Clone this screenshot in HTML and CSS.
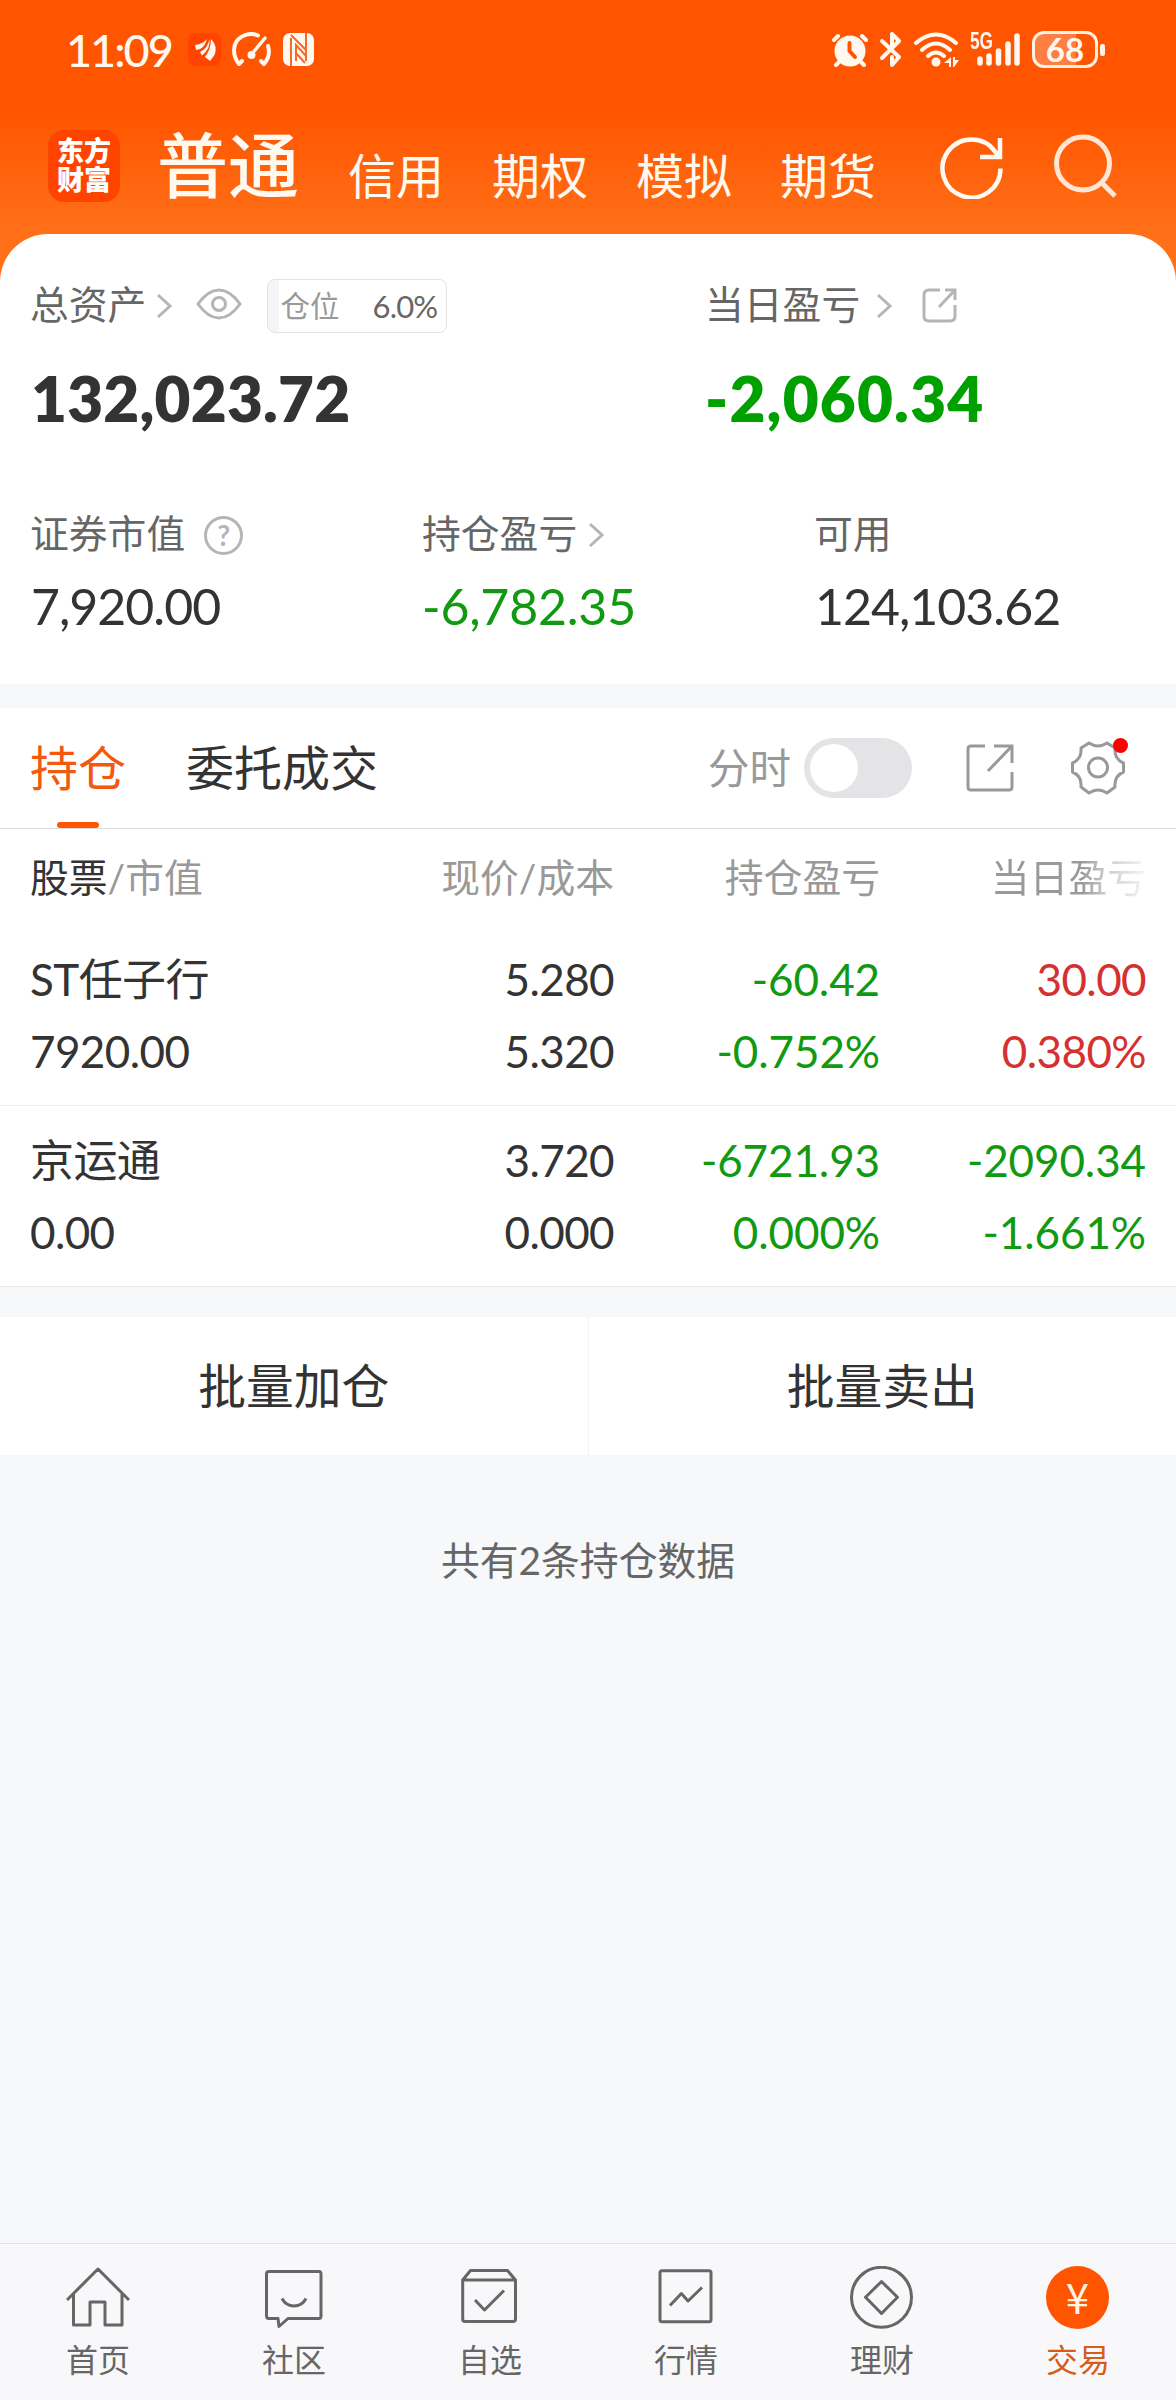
FILE: index.html
```html
<!DOCTYPE html>
<html lang="zh-CN">
<head>
  <meta charset="UTF-8">
  <title>交易</title>
  <link rel="stylesheet" href="styles.css">
</head>
<body>
  <div class="header">
    <div class="status-bar">
      <span class="time">11:09</span>
      <svg class="st-app" width="33" height="33" viewBox="0 0 33 33">
        <rect width="33" height="33" rx="7" fill="#ff4400"/>
        <path d="M7 12Q15 11 19 6Q16 17 8 17ZM12 19Q20 15 21.500 6Q23 15 14 22.500ZM17 24Q23 16 23 6Q30 13 26.500 22L22 28Z" fill="#fff8ee"/>
      </svg>
      <svg class="st-gauge" width="40" height="35" viewBox="0 0 40 35" fill="none" stroke="#fff8ee" stroke-width="4" stroke-linecap="round">
        <path d="M7 32Q2 26 2 18A17 16 0 0 1 26 3.500M36 14Q39 24 32 32M7 32l3-3M32 32l-3-3"/>
        <path d="M33 6L19 23" stroke-width="3.500"/>
        <circle cx="19.500" cy="23" r="4" fill="#fff8ee" stroke="none"/>
      </svg>
      <svg class="st-nfc" width="31" height="33" viewBox="0 0 31 33">
        <rect width="31" height="33" rx="7" fill="#fff8ee"/>
        <path d="M8 5V33M23 0V28M8 2L23 17M13 28V12L23 23M13 20L22 30" fill="none" stroke="#f56a28" stroke-width="2"/>
      </svg>
      <div class="status-right">
        <svg width="36" height="35" viewBox="0 0 36 35" fill="none" stroke="#fff8ee" stroke-width="4" stroke-linecap="round">
          <circle cx="18" cy="19" r="15.500" fill="#fff8ee" stroke="none"/>
          <path d="M2 8L6 4M34 8L30 4M7 30l-3 3M29 30l3 3"/>
          <path d="M17.500 11V19L23 25" stroke="#ff5500" stroke-width="4"/>
        </svg>
        <svg class="st-bt" width="22" height="35" viewBox="0 0 22 35" fill="none" stroke="#fff8ee" stroke-width="4" stroke-linejoin="round" stroke-linecap="round">
          <path d="M2 9L19 25L12 33V25M2 26L19 9L12 2V16"/>
        </svg>
        <svg class="st-wifi" width="45" height="35" viewBox="0 0 45 35" fill="none" stroke="#fff8ee" stroke-width="4" stroke-linecap="round">
          <path d="M2 11Q22 -6 42 11M8 18Q22 5 36 18M14 24Q22 17 30 24"/>
          <circle cx="22" cy="30" r="4.500" fill="#fff8ee" stroke="none"/>
          <path d="M30 31L37 25V35H35V31ZM39 25H41V28H45L40 35H39Z" fill="#fff8ee" stroke="none"/>
        </svg>
        <div class="signal">
          <span class="net">5G</span>
          <svg width="51" height="35" viewBox="0 0 51 35" stroke="#fff8ee" stroke-width="5.500" stroke-linecap="round">
            <path d="M10 27V31M19 24V31M28.500 19V31M38 12V31M47 4V31"/>
          </svg>
        </div>
        <div class="battery"><span>68</span></div>
        <i class="battery-nub"></i>
      </div>
    </div>

    <div class="nav-top">
      <div class="logo">东方<br>财富</div>
      <div class="accounts">
        <span class="account active">普通</span>
        <span class="account">信用</span>
        <span class="account">期权</span>
        <span class="account">模拟</span>
        <span class="account">期货</span>
      </div>
      <svg class="refresh" width="64" height="64" viewBox="0 0 64 64" fill="none" stroke="#fffaf0" stroke-width="4.500">
        <path d="M60.500 33.500A29 29 0 1 1 55 16.500L60 22"/>
        <path d="M60 3V22H40"/>
      </svg>
      <svg class="search" width="64" height="64" viewBox="0 0 64 64" fill="none" stroke="#ffe6d3" stroke-width="5">
        <circle cx="29" cy="29.500" r="26.500"/>
        <path d="M47 48L61 62"/>
      </svg>
    </div>
  </div>

  <div class="assets">
    <div class="totals">
      <div class="total">
        <div class="label">总资产
          <svg class="arrow total-arrow" width="17" height="26" viewBox="0 0 17 26"><path d="M2 2L14 13L2 24"/></svg>
          <svg class="eye" width="46" height="32" viewBox="0 0 46 32" fill="none" stroke="#b5b5b5" stroke-width="3">
            <path d="M2 16Q12 2 23 2Q34 2 44 16Q34 30 23 30Q12 30 2 16Z"/>
            <circle cx="23" cy="16" r="6.500"/>
          </svg>
          <span class="position"><em>仓位</em>6.0%</span>
        </div>
        <div class="amount">132,023.72</div>
      </div>
      <div class="total">
        <div class="label">当日盈亏
          <svg class="arrow day-arrow" width="17" height="26" viewBox="0 0 17 26"><path d="M2 2L14 13L2 24"/></svg>
          <svg class="share" width="36" height="36" viewBox="0 0 36 36" fill="none" stroke="#b5b5b5" stroke-width="3">
            <path d="M18 2H7Q2 2 2 7V28Q2 33 7 33H28Q33 33 33 28V17"/>
            <path d="M23 2H33V12M33 2L17 19"/>
          </svg>
        </div>
        <div class="amount green">-2,060.34</div>
      </div>
    </div>

    <div class="details">
      <div class="detail">
        <div class="label">证券市值 <span class="help">?</span></div>
        <div class="value">7,920.00</div>
      </div>
      <div class="detail">
        <div class="label">持仓盈亏
          <svg class="arrow hold-arrow" width="17" height="26" viewBox="0 0 17 26"><path d="M2 2L14 13L2 24"/></svg>
        </div>
        <div class="value green">-6,782.35</div>
      </div>
      <div class="detail">
        <div class="label">可用</div>
        <div class="value">124,103.62</div>
      </div>
    </div>
  </div>

  <div class="holdings">
    <div class="tabs">
      <span class="tab active">持仓</span>
      <span class="tab">委托成交</span>
      <span class="switch-label">分时</span>
      <span class="switch"></span>
      <svg class="export" width="48" height="48" viewBox="0 0 48 48" fill="none" stroke="#999" stroke-width="3">
        <path d="M19 2H5Q2 2 2 5V43Q2 46 5 46H43Q46 46 46 43V28"/>
        <path d="M28 2H46V19M46 2L22 27"/>
      </svg>
      <div class="settings">
        <svg width="54" height="54" viewBox="0 0 54 54" fill="none" stroke="#999" stroke-width="3" stroke-linejoin="round">
          <path d="M18 2Q27 8 36 2L44 7Q43 18 52.500 22V31Q43 35 44 46L36 52Q27 46 18 52L10 46Q11 35 1.500 31V22Q11 18 10 7Z"/>
          <circle cx="27" cy="26.500" r="9.500"/>
        </svg>
        <i class="dot"></i>
      </div>
    </div>

    <div class="row head">
      <div><b>股票</b>/市值</div>
      <div>现价/成本</div>
      <div>持仓盈亏</div>
      <div class="fade">当日盈亏</div>
    </div>
    <div class="row">
      <div>ST任子行<br>7920.00</div>
      <div>5.280<br>5.320</div>
      <div class="green">-60.42<br>-0.752%</div>
      <div class="red">30.00<br>0.380%</div>
    </div>
    <div class="row">
      <div>京运通<br>0.00</div>
      <div>3.720<br>0.000</div>
      <div class="green">-6721.93<br>0.000%</div>
      <div class="green">-2090.34<br>-1.661%</div>
    </div>
  </div>

  <div class="batch">
    <div class="batch-btn">批量加仓</div>
    <div class="batch-btn">批量卖出</div>
  </div>

  <p class="summary">共有2条持仓数据</p>

  <div class="bottom-nav">
    <div class="nav-item">
      <svg width="64" height="64" viewBox="0 0 64 64">
        <path d="M1 34L32 3L63 34M7.500 28V59H24V36H39V59H56V28"/>
      </svg>
      首页
    </div>
    <div class="nav-item">
      <svg width="64" height="64" viewBox="0 0 64 64">
        <path d="M7 5.500H57Q59 5.500 59 8V50Q59 52.500 57 52.500H26L17 60.500L16 52.500H7Q4.500 52.500 4.500 50V8Q4.500 5.500 7 5.500ZM20 32.500Q24 40 32 40Q40 40 44 32.500"/>
      </svg>
      社区
    </div>
    <div class="nav-item">
      <svg width="64" height="64" viewBox="0 0 64 64">
        <path d="M4.700 14L12.500 4.500H49.500L57.500 14V53Q57.500 55.500 55 55.500H7Q4.700 55.500 4.700 53ZM4.700 14H57.500M17 34L26.500 44L46 24.500"/>
      </svg>
      自选
    </div>
    <div class="nav-item">
      <svg width="64" height="64" viewBox="0 0 64 64">
        <rect x="6" y="4.700" width="51" height="51" rx="2"/>
        <path d="M16 39.500L27.400 27.500L34 35L48 21.500"/>
      </svg>
      行情
    </div>
    <div class="nav-item">
      <svg width="64" height="64" viewBox="0 0 64 64">
        <circle cx="31.500" cy="31.300" r="30"/>
        <path d="M31.500 15.500L47.500 31.300L31.500 47.500L15.500 31.300Z"/>
      </svg>
      理财
    </div>
    <div class="nav-item active">
      <span class="coin">¥</span>
      交易
    </div>
  </div>
</body>
</html>
```
FILE: styles.css
```css
* {
  box-sizing: border-box;
}

body {
  margin: 0;
  width: 1176px;
  height: 2400px;
  display: flex;
  flex-direction: column;
  background-color: #f7f8fa;
  color: #333;
  font-family: Lato, "Noto Sans CJK SC", sans-serif;
}

svg {
  display: block;
  flex: none;
}

.green {
  color: #119911;
}

.red {
  color: #d63031;
}

/* header */
.header {
  height: 284px;
  background: linear-gradient(#ff5500 0, #ff5500 112px, #ff7019 234px, #ff7019 100%);
}

.status-bar {
  height: 99px;
  padding-left: 66px;
  padding-right: 71px;
  display: flex;
  align-items: center;
  color: #fff8ee;
}

.time {
  width: 122px;
  font-size: 45px;
  font-weight: 500;
  letter-spacing: -2px;
}

.st-gauge {
  margin-left: 11px;
}

.st-nfc {
  margin-left: 11px;
}

.status-right {
  margin-left: auto;
  display: flex;
  align-items: center;
}

.st-bt {
  margin-left: 12px;
}

.st-wifi {
  margin-left: 12px;
}

.signal {
  position: relative;
  margin-left: 11px;
}

.net {
  position: absolute;
  left: 0;
  top: 0;
  font-family: "Liberation Sans", sans-serif;
  font-size: 24px;
  line-height: 18px;
  font-weight: bold;
  transform: scaleX(0.72);
  transform-origin: left;
}

.battery {
  width: 66px;
  height: 37px;
  margin-left: 11px;
  border: 3px solid #fff0e0;
  border-radius: 12px;
  background: linear-gradient(90deg, #ff7f42 68%, transparent 68%);
  font-size: 33px;
  line-height: 30px;
  font-weight: bold;
  text-align: center;
}

.battery-nub {
  width: 5px;
  height: 12px;
  margin-left: 2px;
  border-radius: 2px;
  background-color: #fff0e0;
}

.nav-top {
  height: 135px;
  padding-left: 48px;
  display: flex;
  align-items: flex-start;
}

.logo {
  width: 72px;
  height: 72px;
  margin-top: 31px;
  padding-top: 6px;
  border-radius: 16px;
  background-color: #ff4400;
  color: #fff;
  font-size: 27px;
  line-height: 29px;
  font-weight: 900;
  text-align: center;
}

.accounts {
  display: flex;
  gap: 48px;
  margin-left: 37px;
  margin-top: 26px;
  color: #fffaf0;
}

.account {
  font-size: 48px;
  line-height: 80px;
  padding-top: 11px;
}

.account.active {
  margin-right: 1px;
  font-size: 71px;
  font-weight: 500;
  padding-top: 0;
}

.refresh {
  margin-left: 64px;
  margin-top: 36px;
}

.search {
  margin-left: 50px;
  margin-top: 35px;
}

/* account card */
.assets {
  height: 450px;
  margin-top: -50px;
  padding: 40px 0 0 30px;
  border-radius: 48px 48px 0 0;
  background-color: #fff;
}

.totals {
  display: grid;
  grid-template-columns: 675px 1fr;
}

.label {
  height: 60px;
  display: flex;
  align-items: center;
  color: #666;
  font-size: 38.8px;
  line-height: 60px;
}

.arrow {
  fill: none;
  stroke: #b5b5b5;
  stroke-width: 3;
}

.total-arrow {
  margin-left: 10px;
  margin-top: 4px;
}

.eye {
  margin-left: 23px;
}

.position {
  width: 180px;
  height: 54px;
  margin-left: 25px;
  margin-top: 4px;
  padding: 0 9px 0 12px;
  display: flex;
  align-items: center;
  justify-content: space-between;
  border: 1px solid #e3e3e6;
  border-radius: 8px;
  background: linear-gradient(90deg, #f5f5f8 6%, #fff 6%);
  font-size: 31px;
  letter-spacing: -0.8px;
}

.position em {
  color: #999;
  font-size: 29.5px;
  font-style: normal;
  letter-spacing: 0;
}

.day-arrow {
  margin-left: 16px;
  margin-top: 4px;
}

.share {
  margin-left: 29px;
  margin-top: 4px;
}

.amount {
  margin-top: 24px;
  margin-left: 1px;
  font-size: 62px;
  line-height: 80px;
  font-weight: 800;
  letter-spacing: 0.2px;
}

.amount.green {
  margin-left: 0;
  color: #00a000;
  letter-spacing: 1.2px;
}

.details {
  margin-top: 65px;
  display: grid;
  grid-template-columns: 392px 392px 1fr;
}

.help {
  width: 39px;
  height: 39px;
  margin-left: 19px;
  margin-top: 4px;
  border: 3px solid #b5b5b5;
  border-radius: 50%;
  color: #b5b5b5;
  font-size: 28px;
  line-height: 32px;
  font-weight: bold;
  text-align: center;
}

.hold-arrow {
  margin-left: 11px;
  margin-top: 4px;
}

.value {
  margin-top: 13px;
  margin-left: 1px;
  font-size: 50px;
  line-height: 60px;
  letter-spacing: -1px;
}

.value.green {
  margin-left: 0;
  letter-spacing: -0.2px;
}

/* holdings list */
.holdings {
  margin-top: 24px;
  background-color: #fff;
}

.tabs {
  height: 121px;
  padding-left: 30px;
  display: flex;
  align-items: center;
  border-bottom: 1px solid #dcdcde;
}

.tab {
  position: relative;
  margin-right: 60px;
  font-size: 48px;
  line-height: 120px;
}

.tab.active {
  color: #f2590f;
}

.tab.active::after {
  content: "";
  position: absolute;
  left: 27px;
  bottom: 0;
  width: 42px;
  height: 6px;
  border-radius: 3px;
  background-color: #ff5500;
}

.switch-label {
  margin-left: auto;
  margin-bottom: 4px;
  color: #999;
  font-size: 41.5px;
}

.switch {
  width: 108px;
  height: 60px;
  margin-left: 13px;
  padding: 6px;
  border-radius: 30px;
  background-color: #e4e4e7;
}

.switch::before {
  content: "";
  display: block;
  width: 48px;
  height: 48px;
  border-radius: 50%;
  background-color: #fff;
}

.export {
  margin-left: 54px;
}

.settings {
  position: relative;
  margin-left: 57px;
  margin-right: 51px;
}

.dot {
  position: absolute;
  right: -3px;
  top: -3px;
  width: 15px;
  height: 15px;
  border-radius: 50%;
  background-color: #ff0000;
}

.row {
  height: 181px;
  padding: 18px 30px 0 30px;
  display: grid;
  grid-template-columns: 1fr 266px 266px 266px;
  border-bottom: 1px solid #ececee;
  font-size: 44px;
  line-height: 72px;
  letter-spacing: -0.6px;
  text-align: right;
}

.row div:first-child {
  text-align: left;
}

.row .green {
  letter-spacing: -0.1px;
}

.row.head {
  height: 96px;
  padding-top: 0;
  border: none;
  color: #999;
  font-size: 38.8px;
  line-height: 96px;
  letter-spacing: 0;
}

.row.head b {
  color: #333;
  font-weight: normal;
}

.row.head .fade {
  background: linear-gradient(90deg, #999 76%, #ccc 85%, #f5f5f5 100%);
  background-clip: text;
  -webkit-background-clip: text;
  color: transparent;
}

/* batch buttons */
.batch {
  height: 138px;
  margin-top: 30px;
  display: flex;
  background-color: #fff;
}

.batch-btn {
  flex: 1;
  font-size: 47.8px;
  line-height: 137px;
  text-align: center;
}

.batch-btn:first-child {
  border-right: 1px solid #f3f3f5;
}

.summary {
  margin: 75px 0 0;
  color: #666;
  font-size: 38.8px;
  line-height: 60px;
  text-align: center;
}

/* bottom navigation */
.bottom-nav {
  height: 157px;
  margin-top: auto;
  padding-top: 22px;
  display: flex;
  border-top: 1px solid #e2e3e5;
  background-color: #f8f8fa;
}

.nav-item {
  flex: 1;
  display: flex;
  flex-direction: column;
  align-items: center;
  color: #666;
  font-size: 32px;
  line-height: 60px;
}

.nav-item svg {
  fill: none;
  stroke: #666;
  stroke-width: 3;
  stroke-linejoin: round;
}

.nav-item.active {
  color: #d95b18;
}

.coin {
  width: 63px;
  height: 63px;
  margin-bottom: 1px;
  margin-right: 1px;
  border-radius: 50%;
  background-color: #ff5500;
  color: #fff3e6;
  font-family: "Noto Sans CJK SC", sans-serif;
  font-size: 42px;
  line-height: 60px;
  text-align: center;
}
```
